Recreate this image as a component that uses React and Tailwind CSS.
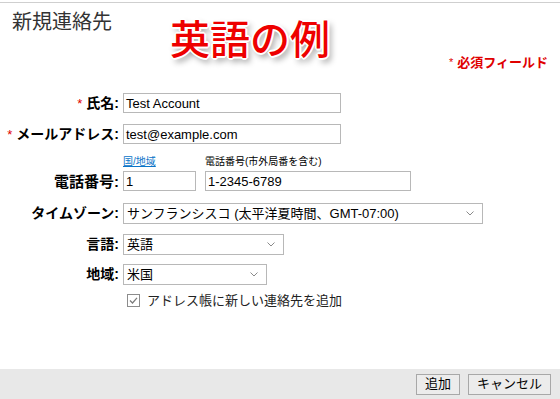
import React from "react";

const FONT = { fontFamily: '"Liberation Sans", "Noto Sans CJK JP", sans-serif' };

function Chevron() {
  return (
    <svg width="8" height="5" viewBox="0 0 8 5" className="shrink-0">
      <path d="M0.5 0.5 L4 4 L7.5 0.5" fill="none" stroke="#8a8a8a" strokeWidth="1" />
    </svg>
  );
}

function Label({ children, req, big }) {
  return (
    <div className={`flex items-center justify-end pr-[4px] font-bold text-black ${big ? "text-[15px]" : "text-[14px]"}`}>
      {req && <span className="text-[#e00000] font-normal text-[13px] mr-[4px]">*</span>}
      <span>{children}</span>
    </div>
  );
}

function Input({ w, value }) {
  return (
    <div className={`${w} h-[20px] border border-[#b8b8b8] bg-white flex items-center pl-[2px] text-[13px] text-black leading-none`}>
      {value}
    </div>
  );
}

function Select({ w, value }) {
  return (
    <div className={`${w} h-[21px] border border-[#b8b8b8] bg-white flex items-center justify-between pl-[3px] pr-[8px] text-[13px] text-black leading-none`}>
      <span>{value}</span>
      <Chevron />
    </div>
  );
}

export default function App() {
  return (
    <div className="w-[560px] h-[399px] bg-white relative overflow-hidden flex flex-col" style={FONT}>
      <div className="h-[2px] shrink-0" />
      <div className="border-t border-[#cfcfcf] shrink-0" />
      <div className="h-[51px] shrink-0 pl-[12px] pt-[4px]">
        <div className="text-[20px] leading-[28px] text-[#333]" style={{ fontFamily: '"Noto Sans CJK JP", sans-serif' }}>
          新規連絡先
        </div>
      </div>
      <div
        className="absolute left-[170px] top-[17px] text-[40px] leading-none font-medium text-[#ee0000]"
        style={{
          fontFamily: '"Noto Sans CJK JP", sans-serif',
          textShadow:
            "1px 1px 0 #fff, -1px -1px 0 #fff, 1px -1px 0 #fff, -1px 1px 0 #fff, 2px 0 0 #fff, -2px 0 0 #fff, 0 2px 0 #fff, 0 -2px 0 #fff, 3px 4px 6px rgba(0,0,0,0.45)",
        }}
      >
        英語の例
      </div>
      <div className="h-[17px] shrink-0 flex justify-end pr-[12px] text-[13px] leading-[17px] font-bold text-[#e00000]">
        <span className="font-normal text-[11px] mr-[4px]">*</span>
        必須フィールド
      </div>

      <div className="grid grid-cols-[123px_1fr] mt-[22px]">
        <Label req>氏名:</Label>
        <Input w="w-[218px]" value="Test Account" />
      </div>
      <div className="grid grid-cols-[123px_1fr] mt-[10px]">
        <Label req>メールアドレス:</Label>
        <Input w="w-[218px]" value="test@example.com" />
      </div>
      <div className="grid grid-cols-[123px_1fr] mt-[9px]">
        <div />
        <div className="flex text-[10px] leading-[16px] h-[16px]">
          <span className="w-[82px] text-[#0a74c8] underline">国/地域</span>
          <span className="text-black">電話番号(市外局番を含む)</span>
        </div>
      </div>
      <div className="grid grid-cols-[123px_1fr] mt-[1px]">
        <Label big>電話番号:</Label>
        <div className="flex gap-[9px]">
          <Input w="w-[73px]" value="1" />
          <Input w="w-[206px]" value="1-2345-6789" />
        </div>
      </div>
      <div className="grid grid-cols-[123px_1fr] mt-[9px]">
        <Label>タイムゾーン:</Label>
        <Select w="w-[360px]" value="サンフランシスコ (太平洋夏時間、GMT-07:00)" />
      </div>
      <div className="grid grid-cols-[123px_1fr] mt-[10px]">
        <Label>言語:</Label>
        <Select w="w-[161px]" value="英語" />
      </div>
      <div className="grid grid-cols-[123px_1fr] mt-[9px]">
        <Label>地域:</Label>
        <Select w="w-[144px]" value="米国" />
      </div>
      <div className="grid grid-cols-[123px_1fr] mt-[6px]">
        <div />
        <div className="flex items-center gap-[7px] pl-[4px] h-[20px]">
          <svg width="13" height="13" viewBox="0 0 13 13">
            <rect x="0.5" y="0.5" width="12" height="12" fill="#fff" stroke="#8c8c8c" />
            <path d="M3 6.5 L5.5 9 L10 3.8" fill="none" stroke="#7a7a7a" strokeWidth="1.2" />
          </svg>
          <span className="text-[13px] text-[#222]">アドレス帳に新しい連絡先を追加</span>
        </div>
      </div>

      <div className="flex-1" />
      <div className="h-[30px] shrink-0 bg-[#e8e8e8] flex items-center justify-end gap-[8px] pr-[9px]">
        <div className="h-[21px] px-[8px] border border-[#a8a8a8] bg-[#ececec] flex items-center text-[13px] text-black">追加</div>
        <div className="h-[21px] px-[8px] border border-[#a8a8a8] bg-[#ececec] flex items-center text-[13px] text-black">キャンセル</div>
      </div>
    </div>
  );
}
